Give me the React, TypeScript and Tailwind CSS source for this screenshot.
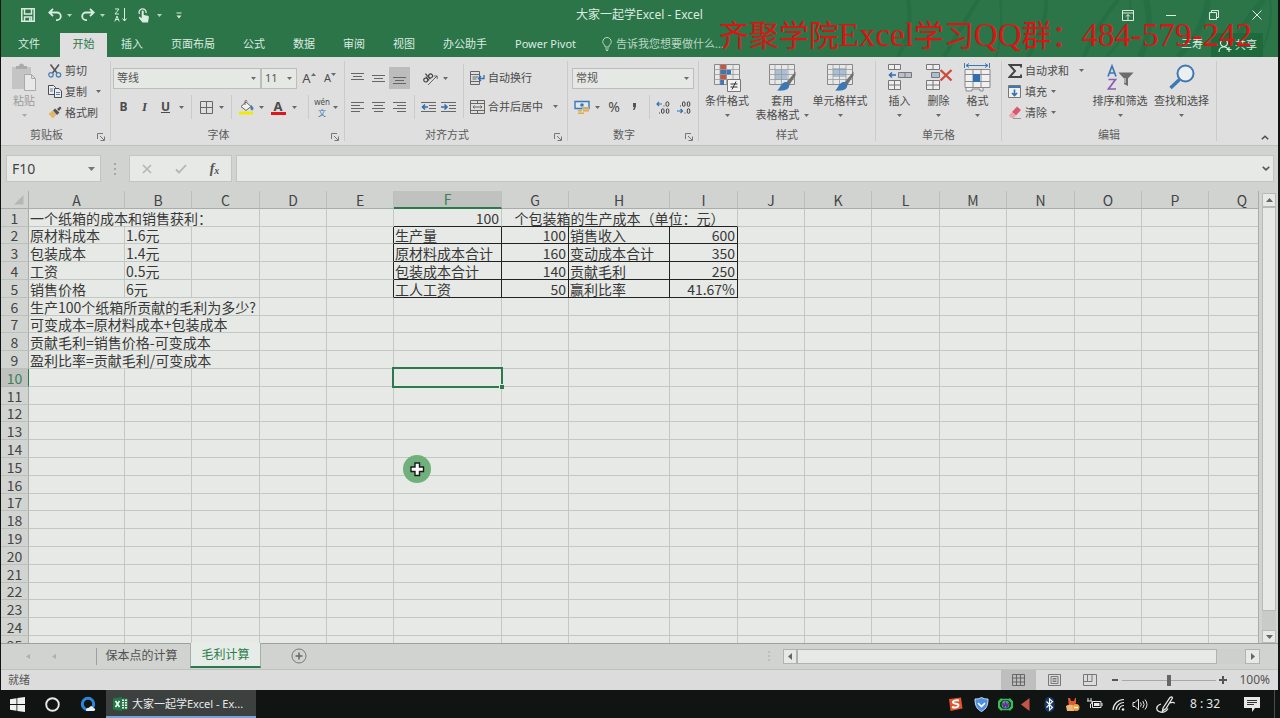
import React from "react";

type IconProps = { className?: string; children?: React.ReactNode; w?: number; h?: number };

function Svg({ className = "", children, w = 16, h = 16 }: IconProps) {
  return (
    <svg className={`shrink-0 ${className}`} width={w} height={h} viewBox={`0 0 ${w} ${h}`} fill="none" stroke="currentColor" aria-hidden="true">
      {children}
    </svg>
  );
}

function Caret({ className = "" }: { className?: string }) {
  return (
    <Svg w={5} h={3} className={className}>
      <path d="M0 0h5L2.5 3z" fill="currentColor" stroke="none" opacity=".8" />
    </Svg>
  );
}

function IconButton({ label, className, children }: { label: string; className: string; children: React.ReactNode }) {
  return (
    <button type="button" aria-label={label} className={`flex shrink-0 items-center justify-center ${className}`}>
      {children}
    </button>
  );
}

function VLine({ className = "h-5", color = "bg-[#cbcbcb]" }: { className?: string; color?: string }) {
  return <span className={`w-px shrink-0 ${color} ${className}`} />;
}

/* ---------- title bar ---------- */

function TitleBar() {
  return (
    <div className="flex h-[30px] items-center text-[#dcebe0]">
      <div className="flex flex-1 items-center">
        <IconButton label="保存" className="ml-[17px] h-6 w-5">
          <Svg w={14} h={14}>
            <path d="M.8.8h12.4v12.4H.8zM3.500 1v5h7V1M3.500 13V9h7v4" strokeWidth="1.500" />
            <path d="M8 10h1.500v3H8z" fill="currentColor" stroke="none" />
          </Svg>
        </IconButton>
        <IconButton label="撤消" className="ml-2 h-6 w-[18px]">
          <Svg w={14} h={14}>
            <path d="M1.500 4.500h7.500a3.800 3.800 0 0 1 0 7.600H8M5 .8 1.300 4.500 5 8.200" strokeWidth="1.800" />
          </Svg>
        </IconButton>
        <IconButton label="撤消选项" className="h-6 w-[10px]"><Caret /></IconButton>
        <IconButton label="恢复" className="ml-[5px] h-6 w-[18px]">
          <Svg w={14} h={14}>
            <path d="M12.500 4.500H5a3.800 3.800 0 0 0 0 7.600h1M9 .8l3.700 3.700L9 8.200" strokeWidth="1.800" />
          </Svg>
        </IconButton>
        <IconButton label="恢复选项" className="h-6 w-[10px]"><Caret /></IconButton>
        <IconButton label="降序排序" className="ml-1 h-6 w-5">
          <Svg w={14} h={14}>
            <path d="M1 1h4L1 6h4M.8 13.500 3 8l2.200 5.500M1.500 11.500h3M10.500 0v13M8.500 10.500l2 2.500 2-2.500" />
          </Svg>
        </IconButton>
        <IconButton label="触摸模式" className="ml-1 h-6 w-[18px]">
          <Svg w={14} h={15}>
            <path d="M2.500 6a3.500 3.500 0 1 1 6.500-1" strokeWidth="1.300" />
            <path d="M4.700 3.500c0-1.300 2-1.300 2 0V7l4 .8c1 .2 1.300.9 1.100 2L11 14.500H5.500L2 10.200c-.6-1 .6-1.800 1.400-1l1.300 1z" fill="currentColor" stroke="none" />
          </Svg>
        </IconButton>
        <IconButton label="触摸选项" className="h-6 w-3"><Caret /></IconButton>
        <IconButton label="自定义快速访问工具栏" className="ml-2 h-6 w-3">
          <Svg w={6} h={7}>
            <path d="M.5 1h5" />
            <path d="M.5 3.500h5L3 6.500z" fill="currentColor" stroke="none" />
          </Svg>
        </IconButton>
      </div>
      <h1 className="text-[12px] leading-4">大家一起学Excel - Excel</h1>
      <div className="flex flex-1 justify-end">
        <IconButton label="功能区显示选项" className="h-7 w-[43px]">
          <Svg w={12} h={11}>
            <path d="M.5.5h11v10H.5zM.5 3h11M6 10V5M4 6.500 6 4.500l2 2" />
          </Svg>
        </IconButton>
        <IconButton label="最小化" className="h-7 w-[43px]">
          <Svg w={10} h={10}><path d="M0 5.500h10" /></Svg>
        </IconButton>
        <IconButton label="还原" className="h-7 w-[43px]">
          <Svg w={10} h={10}><path d="M.5 2.500h7v7h-7zM2.500 2V.5h7v7H8" /></Svg>
        </IconButton>
        <IconButton label="关闭" className="h-7 w-[43px]">
          <Svg w={10} h={10}><path d="m.5.5 9 9M9.500.5l-9 9" /></Svg>
        </IconButton>
      </div>
    </div>
  );
}

const ribbonTabs = ["插入", "页面布局", "公式", "数据", "审阅", "视图", "办公助手", "Power Pivot"];

function RibbonTabs() {
  return (
    <nav className="flex h-[27px] items-stretch text-[11px] leading-4 text-[#dcebe0]">
      <button type="button" className="mr-[3px] w-14">文件</button>
      <button type="button" className="mt-[3px] w-[47px] bg-[#dfdfdf] pb-[3px] text-[#2b7a4b]">开始</button>
      {ribbonTabs.map((t) => (
        <button type="button" key={t} className="px-[14px] last-of-type:px-2">{t}</button>
      ))}
      <label className="flex flex-1 items-center gap-1 pl-3 text-[#b9d6c3]">
        <Svg w={10} h={14}>
          <path d="M3 10V8.500C1.500 7.500.8 6.200.8 4.700a4.200 4.200 0 0 1 8.400 0C9.200 6.200 8.500 7.500 7 8.500V10zM3.200 12h3.600M4 13.500h2" />
        </Svg>
        <input aria-label="告诉我" placeholder="告诉我您想要做什么..." className="w-32 bg-transparent outline-none placeholder:text-[#b9d6c3]" />
      </label>
      <button type="button" className="px-2">三寿</button>
      <button type="button" className="mt-[3px] mr-[15px] flex items-center gap-[2px] bg-[#1f6a3d] px-[6px]">
        <Svg w={16} h={14}>
          <path d="M7 8.500a3.500 3.500 0 1 0-.1 0M2 14c0-3 2-5 5-5s3.500 1 4 2M12 9v5M9.500 11.500h5" strokeWidth="1.200" />
        </Svg>
        共享
      </button>
    </nav>
  );
}

function Header() {
  return (
    <header className="relative z-10 bg-[#2b7549]">
      <svg className="pointer-events-none absolute top-0 right-0 h-full w-[400px]" viewBox="0 0 400 57" preserveAspectRatio="none" aria-hidden="true">
        <g fill="none" stroke="#1e663b" opacity=".35">
          <path d="M20 57Q36 28 30 0M66 57Q84 26 100 0M150 57Q170 20 168 0M206 57Q216 28 240 0" strokeWidth="4" />
          <path d="M262 57Q276 30 268 0M300 57Q326 30 330 0M352 57Q362 24 386 0" strokeWidth="6" />
          <path d="M118 57Q126 32 122 0M228 57Q256 30 252 0M380 57Q396 30 392 0" strokeWidth="2" />
        </g>
      </svg>
      <div className="relative">
        <TitleBar />
        <RibbonTabs />
      </div>
      <p className="pointer-events-none absolute top-[15px] right-[26px] font-['Liberation_Serif','Noto_Sans_CJK_SC',serif] text-[33px] leading-[40px] whitespace-nowrap text-[#dc1414]">
        <span className="text-[30px]">齐聚学院</span>Excel<span className="text-[30px]">学习</span>QQ<span className="text-[30px]">群：</span>484-579-242
      </p>
    </header>
  );
}

/* ---------- ribbon ---------- */

function Group({ label, className, launcher = false, children }: { label: string; className: string; launcher?: boolean; children: React.ReactNode }) {
  return (
    <section aria-label={label} className={`flex shrink-0 flex-col ${className}`}>
      <div className="flex min-h-0 flex-1">
        <div className="min-w-0 flex-1 pt-[3px]">{children}</div>
      </div>
      <div className="flex h-5 items-center pb-px text-[11px] leading-4 text-[#5c5c5c]">
        <span className="flex-1 text-center">{label}</span>
        {launcher && (
          <IconButton label={`${label}设置`} className="h-4 w-[18px] pt-1">
            <Svg w={8} h={8} className="text-[#777]"><path d="M.5 6V.5H6M3 3l4 4M7.500 3.500v4h-4" /></Svg>
          </IconButton>
        )}
      </div>
    </section>
  );
}

function SmallButton({ icon, text, caret = "" }: { icon: React.ReactNode; text: string; caret?: string }) {
  return (
    <button type="button" className="flex h-[21px] items-center text-[11px] leading-4 whitespace-nowrap">
      <span className="mr-[3px] flex w-[15px] justify-center">{icon}</span>
      {text}
      {caret && <Caret className={caret} />}
    </button>
  );
}

function BigButton({ icon, text, second, className }: { icon: React.ReactNode; text: string; second?: string; className: string }) {
  return (
    <button type="button" className={`flex shrink-0 flex-col items-center text-[11px] leading-[14px] whitespace-nowrap ${className}`}>
      <span className="flex h-[34px] items-center">{icon}</span>
      <span>{text}</span>
      <span className="flex h-[14px] items-center gap-1">{second}<Caret /></span>
    </button>
  );
}

function SelectBox({ label, value, className }: { label: string; value: string; className: string }) {
  return (
    <span className={`relative flex h-[21px] ${className}`}>
      <select aria-label={label} defaultValue={value} className="w-full appearance-none border border-[#bdbdbd] bg-[#e6e8e6] pl-[3px] text-[11px] leading-4 text-[#555] outline-none">
        <option>{value}</option>
      </select>
      <Caret className="pointer-events-none absolute top-[9px] right-[5px]" />
    </span>
  );
}

function Lines({ d }: { d: string }) {
  return <Svg w={13} h={12}><path d={d} stroke="#666" /></Svg>;
}

function StyleGrid({ conditional = false, fill = "M7 7h12v10H7z" }: { conditional?: boolean; fill?: string }) {
  return (
    <Svg w={28} h={29}>
      <path d="M1.500 1.500h25v20h-25z" fill="#e8e8e8" stroke="#888" />
      {conditional ? (
        <>
          <path d="M7 2h6v5H7zM7 12h7v5H7z" fill="#c8553d" stroke="none" />
          <path d="M7 7h11v5H7zM7 17h4v5H7z" fill="#3c78b4" stroke="none" />
        </>
      ) : (
        <path d={fill} fill="#a9bfd6" stroke="none" />
      )}
      <path d="M7 1.500v20M13.500 1.500v20M20 1.500v20M1.500 6.500h25M1.500 11.500h25M1.500 16.500h25" stroke="#999" strokeWidth=".8" />
      {conditional ? (
        <>
          <path d="M14.500 16.500h13v12h-13z" fill="#f3f3f3" stroke="#777" />
          <path d="M17.500 21h7M17.500 24h7M23 18.500l-4 8" stroke="#333" />
        </>
      ) : (
        <>
          <path d="M27.500 8.500 18 20l3 2.500 6.500-10z" fill="#707070" stroke="none" />
          <path d="M17 19c3 0 5 2 4 5-1.500 3.500-6.500 4-12 3.500 3.500-2 3-7 8-8.500z" fill="#3c78b4" stroke="none" />
        </>
      )}
    </Svg>
  );
}

function Ribbon() {
  return (
    <div className="relative flex h-[89px] shrink-0 items-stretch overflow-hidden border-b border-[#bfc1bf] bg-[#dfdfdf] text-[#4c4c4c]">
      <Group label="剪贴板" className="w-[109px]" launcher>
        <div className="flex">
          <div className="w-[46px] text-[#9c9c9c]">
            <BigButton
              className="w-full"
              text="粘贴"
              icon={
                <Svg w={26} h={28}>
                  <path d="M1 4h19v22H1z" fill="#c4c4c4" stroke="none" />
                  <path d="M5 6V3h3c0-3.500 5-3.500 5 0h3v3z" fill="#aaa" stroke="none" />
                  <path d="M13.500 11.500h7l4 4v12h-11zM20.500 11.500v4h4" fill="#e8e8e8" stroke="#aaa" />
                </Svg>
              }
            />
          </div>
          <div className="flex flex-col items-start">
            <SmallButton
              text="剪切"
              icon={
                <Svg w={14} h={14}>
                  <path d="M2.500.5 9 9M11 .5 4.500 9" stroke="#555" strokeWidth="1.600" />
                  <circle cx="3" cy="10.800" r="2.200" stroke="#4b84b8" strokeWidth="1.300" />
                  <circle cx="10.500" cy="10.800" r="2.200" stroke="#4b84b8" strokeWidth="1.300" />
                </Svg>
              }
            />
            <SmallButton
              text="复制"
              caret="ml-[9px]"
              icon={
                <Svg w={14} h={13}>
                  <path d="M.5.5h5l2 2v7h-7z" fill="#eee" />
                  <path d="M2 4h3M2 6h3" stroke="#4b84b8" />
                  <path d="M6.500 3.500h4.500l2.500 2.500v6.500h-7z" fill="#eee" />
                  <path d="M8 7.500h4M8 9.500h4" stroke="#4b84b8" />
                </Svg>
              }
            />
            <SmallButton
              text="格式刷"
              icon={
                <Svg w={14} h={13}>
                  <path d="m.5 8 4-3.500 4 4-3.500 4z" fill="#e3b76b" stroke="none" />
                  <path d="M5 4.500 7 2.500l4.500 4-2.500 2.500zM9 3l3-2.500 1.500 1.500L11 5z" fill="#555" stroke="none" />
                </Svg>
              }
            />
          </div>
        </div>
      </Group>
      <VLine className="my-1" />
      <Group label="字体" className="w-[233px]" launcher>
        <div className="flex h-9 items-center pl-[2px]">
          <SelectBox label="字体" value="等线" className="w-[148px]" />
          <SelectBox label="字号" value="11" className="w-9" />
          <IconButton label="增大字号" className="ml-[2px] h-5 w-5 text-[13px] leading-4">
            A<Caret className="mb-2 rotate-180" />
          </IconButton>
          <IconButton label="减小字号" className="ml-[2px] h-5 w-[18px] text-[11px] leading-4">
            A<Caret className="mb-2" />
          </IconButton>
        </div>
        <div className="flex h-[22px] items-center pl-[2px]">
          <IconButton label="加粗" className="h-5 w-[21px] text-[12px] leading-4 font-bold">B</IconButton>
          <IconButton label="倾斜" className="h-5 w-[21px] font-['Liberation_Serif',serif] text-[13px] leading-4 font-bold italic">I</IconButton>
          <IconButton label="下划线" className="h-5 w-[21px] text-[12px] leading-4 font-bold underline">U</IconButton>
          <IconButton label="下划线选项" className="h-5 w-[11px]"><Caret /></IconButton>
          <VLine className="ml-1 h-6" />
          <IconButton label="边框" className="ml-1 h-5 w-5">
            <Svg w={13} h={13}><path d="M.5.5h12v12H.5zM6.500.5v12M.5 6.500h12" stroke="#666" /></Svg>
          </IconButton>
          <IconButton label="边框选项" className="h-5 w-[11px]"><Caret /></IconButton>
          <VLine className="ml-1 h-6" />
          <IconButton label="填充颜色" className="ml-1 h-5 w-5">
            <Svg w={15} h={15}>
              <path d="M2 6.500 7 2l5 4.500-5 4z" fill="#f2f2f2" stroke="#666" />
              <path d="M6 5V1.500c0-1.500 2-1.500 2 0" stroke="#666" />
              <path d="M12 5.500c1.500 1 2.500 2.500 1.800 4-.5.800-1.800.500-1.800-.5z" fill="#3c78b4" stroke="#3c78b4" strokeWidth=".8" />
              <path d="M0 11.500h14v3H0z" fill="#f2ea00" stroke="none" />
            </Svg>
          </IconButton>
          <IconButton label="填充颜色选项" className="h-5 w-[11px]"><Caret /></IconButton>
          <IconButton label="字体颜色" className="h-5 w-[22px]">
            <span className="flex flex-col items-center border-b-3 border-[#e0161c] px-[3px] text-[13px] leading-[12px] font-bold">A</span>
          </IconButton>
          <IconButton label="字体颜色选项" className="h-5 w-[11px]"><Caret /></IconButton>
          <VLine className="ml-2 h-6" />
          <IconButton label="拼音" className="ml-1 h-[22px] w-[18px]">
            <span className="flex flex-col items-center text-[8px] leading-[11px]">
              <span>wén</span>
              <span className="text-[#3c78b4]">文</span>
            </span>
          </IconButton>
          <IconButton label="拼音选项" className="h-5 w-2"><Caret /></IconButton>
        </div>
      </Group>
      <VLine className="my-1" />
      <Group label="对齐方式" className="w-[222px]" launcher>
        <div className="flex">
          <div className="w-[118px] shrink-0">
            <div className="flex h-9 items-center pl-[2px]">
              <IconButton label="顶端对齐" className="h-[22px] w-[21px]"><Lines d="M0 1.500h13M2 4.500h9M0 7.500h13" /></IconButton>
              <IconButton label="垂直居中" className="h-[22px] w-[21px]"><Lines d="M0 3.500h13M2 6.500h9M0 9.500h13" /></IconButton>
              <IconButton label="底端对齐" className="h-[22px] w-[21px] bg-[#bcbcbc]"><Lines d="M0 5.500h13M2 8.500h9M0 11.500h13" /></IconButton>
              <IconButton label="方向" className="ml-[10px] h-5 w-5">
                <Svg w={17} h={15}>
                  <path d="M6 14 15 5M12 5h3.200v3" stroke="#666" />
                  <g stroke="#444" strokeWidth="1.200" transform="rotate(-42 6 7)">
                    <circle cx="3" cy="7" r="2" /><path d="M5.200 4.500V9.500M7 2v7.500" /><circle cx="9.300" cy="7.200" r="2" />
                  </g>
                </Svg>
              </IconButton>
              <IconButton label="方向选项" className="h-5 w-[10px]"><Caret /></IconButton>
            </div>
            <div className="flex h-[22px] items-center pl-[2px]">
              <IconButton label="左对齐" className="h-5 w-[21px]"><Lines d="M0 1.500h13M0 4.500h9M0 7.500h13M0 10.500h9" /></IconButton>
              <IconButton label="居中" className="h-5 w-[21px]"><Lines d="M0 1.500h13M2 4.500h9M0 7.500h13M2 10.500h9" /></IconButton>
              <IconButton label="右对齐" className="h-5 w-[21px]"><Lines d="M0 1.500h13M4 4.500h9M0 7.500h13M4 10.500h9" /></IconButton>
              <VLine className="ml-1 h-6" />
              <IconButton label="减少缩进量" className="ml-[3px] h-5 w-5">
                <Svg w={15} h={12}>
                  <path d="M0 1.500h15M8 4.500h7M8 7.500h7M0 10.500h15" stroke="#666" />
                  <path d="M7 6H1.500M4 3.500 1.500 6 4 8.500" stroke="#2f6fb2" strokeWidth="1.600" />
                </Svg>
              </IconButton>
              <IconButton label="增加缩进量" className="h-5 w-5">
                <Svg w={15} h={12}>
                  <path d="M0 1.500h15M8 4.500h7M8 7.500h7M0 10.500h15" stroke="#666" />
                  <path d="M0 6h5.500M3.500 3.500 6 6 3.500 8.500" stroke="#2f6fb2" strokeWidth="1.600" />
                </Svg>
              </IconButton>
            </div>
          </div>
          <VLine className="mt-1 h-[54px]" />
          <div className="flex flex-col items-start pl-[6px]">
            <div className="flex h-9 items-center">
              <SmallButton
                text="自动换行"
                icon={
                  <Svg w={15} h={14}>
                    <path d="M.5.5h9v13h-9zM0 3.500h10M0 10.500h10M2.500 6h6M2.500 8h4" stroke="#666" />
                    <path d="M14 4v3.500H9M11 5 8.500 7.500 11 10" stroke="#2f6fb2" strokeWidth="1.300" />
                  </Svg>
                }
              />
            </div>
            <SmallButton
              text="合并后居中"
              caret="ml-[10px]"
              icon={
                <Svg w={15} h={14}>
                  <path d="M.5.5h14v13H.5zM.5 3.500h14M.5 10.500h14M7.500.5v3M7.500 10.500v3M3 7h9M4.500 5.500 3 7l1.500 1.500M10.500 5.500 12 7l-1.500 1.500" stroke="#666" />
                </Svg>
              }
            />
          </div>
        </div>
      </Group>
      <VLine className="my-1" />
      <Group label="数字" className="w-[130px]" launcher>
        <div className="flex h-9 items-center pl-1">
          <SelectBox label="数字格式" value="常规" className="w-[122px]" />
        </div>
        <div className="flex h-[22px] items-center pl-1">
          <IconButton label="会计数字格式" className="h-5 w-5">
            <Svg w={16} h={15}>
              <path d="M1 1.500h14v7H1z" fill="#dbe7f2" stroke="#3c78b4" strokeWidth="1.400" />
              <circle cx="8" cy="5" r="1.800" fill="#3c78b4" stroke="none" />
              <path d="M8 7h7v2H8zM9 10h6v1.500H9zM4 12.500h6V14H4zM4 10h4v1.500H4z" fill="#dfa94e" stroke="none" />
            </Svg>
          </IconButton>
          <IconButton label="会计格式选项" className="h-5 w-[11px]"><Caret /></IconButton>
          <IconButton label="百分比样式" className="h-5 w-[22px] text-[14px] leading-4">%</IconButton>
          <IconButton label="千位分隔样式" className="h-5 w-[18px]">
            <Svg w={5} h={8}><path d="M1 0h3v3.500L2.500 7H1l1-3H1z" fill="#555" stroke="none" /></Svg>
          </IconButton>
          <VLine className="ml-[6px] h-6" />
          <IconButton label="增加小数位数" className="ml-[3px] h-5 w-5">
            <Svg w={14} h={13}>
              <path d="M6 3H1M3 1 1 3l2 2" stroke="#2f6fb2" strokeWidth="1.200" />
              <rect x="10" y=".8" width="2.800" height="4.500" rx="1.400" stroke="#444" />
              <rect x="5.500" y="7.800" width="2.500" height="4.500" rx="1.200" stroke="#444" />
              <rect x="10.300" y="7.800" width="2.500" height="4.500" rx="1.200" stroke="#444" />
              <path d="M8 4.500v1M3.500 11.500v1" stroke="#444" />
            </Svg>
          </IconButton>
          <IconButton label="减少小数位数" className="h-5 w-[21px]">
            <Svg w={14} h={13}>
              <path d="M0 10h5.500M3.500 8l2 2-2 2" stroke="#2f6fb2" strokeWidth="1.200" />
              <rect x="5.500" y=".8" width="2.500" height="4.500" rx="1.200" stroke="#444" />
              <rect x="10.300" y=".8" width="2.500" height="4.500" rx="1.200" stroke="#444" />
              <rect x="10.300" y="7.800" width="2.500" height="4.500" rx="1.200" stroke="#444" />
              <path d="M3.500 4.500v1M8 11.500v1" stroke="#444" />
            </Svg>
          </IconButton>
        </div>
      </Group>
      <VLine className="my-1" />
      <Group label="样式" className="w-[176px]">
        <div className="flex">
          <BigButton className="w-[56px]" text="条件格式" icon={<StyleGrid conditional />} />
          <BigButton className="w-[54px]" text="套用" second="表格格式" icon={<StyleGrid />} />
          <BigButton className="w-[62px]" text="单元格样式" icon={<StyleGrid fill="M7 5h13v9H7z" />} />
        </div>
      </Group>
      <VLine className="my-1" />
      <Group label="单元格" className="w-[125px]">
        <div className="flex pl-1">
          <BigButton
            className="w-[39px]"
            text="插入"
            icon={
              <Svg w={26} h={27}>
                <path d="M1.500.5h12v5h-12zM7.500.5v5M1.500 16.500h12v9h-12zM7.500 16.500v9M1.500 21h12" fill="#eee" stroke="#777" />
                <path d="M11.500 8.500h13v5h-13zM18 8.500v5" fill="#b9c2cc" stroke="#777" />
                <path d="M9 11H2.500M5 8.500 2.500 11 5 13.500" stroke="#2f6fb2" strokeWidth="1.600" />
              </Svg>
            }
          />
          <BigButton
            className="w-[39px]"
            text="删除"
            icon={
              <Svg w={28} h={27}>
                <path d="M1.500.5h13v5h-13zM8 .5v5M1.500 16.500h13v9h-13zM8 16.500v9M1.500 21h13" fill="#eee" stroke="#777" />
                <path d="M6.500 8.500h8v5h-8z" fill="#a9bfd6" stroke="#777" />
                <path d="m15.500 6 11 10.500M26.500 6l-11 10.500" stroke="#cf4a38" strokeWidth="2.400" />
              </Svg>
            }
          />
          <BigButton
            className="w-[39px]"
            text="格式"
            icon={
              <Svg w={27} h={29}>
                <path d="M2 2.500h22M5 .5l-3 2 3 2M21 .5l3 2-3 2M.5 0v5M25.500 0v5" stroke="#3c78b4" />
                <path d="M1 6.500h25v18H1zM9 6.500v18M17 6.500v18M1 11.500h25M1 18.500h25" fill="#f0f0f0" stroke="#888" />
                <path d="M9 11h7v8H9z" fill="#2f6fb2" stroke="none" />
                <path d="M2 25v3h6v-2h8v2h3v-3" fill="#eee" stroke="#888" />
              </Svg>
            }
          />
        </div>
      </Group>
      <VLine className="my-1" />
      <Group label="编辑" className="w-[214px]">
        <div className="flex">
          <div className="flex w-[87px] flex-col items-start pl-[5px]">
            <SmallButton
              text="自动求和"
              caret="ml-[10px]"
              icon={<Svg w={14} h={14}><path d="M13 3.500V1H1.500L7 7l-5.500 6H13v-2.500" stroke="#444" strokeWidth="1.900" /></Svg>}
            />
            <SmallButton
              text="填充"
              caret="ml-1"
              icon={
                <Svg w={13} h={13}>
                  <path d="M.5.5h12v12H.5z" fill="#f0f0f0" stroke="#777" />
                  <path d="M1 1h11v2H1z" fill="#3c78b4" stroke="none" />
                  <path d="M6.500 4.500v6M4 8l2.500 2.500L9 8" stroke="#2f6fb2" strokeWidth="1.600" />
                </Svg>
              }
            />
            <SmallButton
              text="清除"
              caret="ml-1"
              icon={
                <Svg w={14} h={13}>
                  <path d="m4 6 5-5.500 4 3.500-5 5.500z" fill="#d9596d" stroke="none" />
                  <path d="M4 6 .8 9.500 3 12h3l2-2.500z" fill="#eba7b1" stroke="none" />
                  <path d="M5 12.500h8" stroke="#999" />
                </Svg>
              }
            />
          </div>
          <BigButton
            className="w-[62px]"
            text="排序和筛选"
            icon={
              <Svg w={29} h={27}>
                <path d="M2 12.500 6 2l4 10.500M3.500 9h5" stroke="#3c78b4" strokeWidth="1.700" />
                <path d="M2.500 15.500h7l-7 9.500h7.500" stroke="#8a5cb5" strokeWidth="1.700" />
                <path d="M12.500 8.500h15l-5.500 6v7.500l-4-2v-5.500z" fill="#6c6c6c" stroke="none" />
                <path d="M19 14v5" stroke="#ccc" strokeWidth="1.300" />
              </Svg>
            }
          />
          <BigButton
            className="w-[61px]"
            text="查找和选择"
            icon={
              <Svg w={26} h={26}>
                <circle cx="16.500" cy="9.500" r="8" fill="#eceff1" stroke="#3c78b4" strokeWidth="2" />
                <path d="m10.500 15.500-9 8.500" stroke="#3c78b4" strokeWidth="3.400" />
              </Svg>
            }
          />
        </div>
      </Group>
      <VLine className="my-1" />
      <div className="flex flex-1 items-end justify-end pr-[7px] pb-[2px]">
        <IconButton label="折叠功能区" className="h-3 w-3">
          <Svg w={8} h={5}><path d="M.8 4.300 4 1.200l3.200 3.100" strokeWidth="1.500" /></Svg>
        </IconButton>
      </div>
    </div>
  );
}

/* ---------- formula bar ---------- */

function FormulaBar() {
  return (
    <div className="flex h-[45px] shrink-0 items-center bg-[#d0d3d0] pr-[4px] pl-[5px] text-[#555]">
      <div className="flex h-[27px] w-[95px] items-center border border-[#c2c5c2] bg-[#e6e9e5]">
        <input aria-label="名称框" defaultValue="F10" className="w-full min-w-0 bg-transparent pl-[5px] text-[14px] leading-5 text-[#444] outline-none" />
        <IconButton label="名称列表" className="h-5 w-[18px]">
          <Svg w={7} h={4}><path d="M0 0h7L3.500 4z" fill="#777" stroke="none" /></Svg>
        </IconButton>
      </div>
      <Svg w={28} h={14} className="text-[#999]">
        <path d="M14 1v2M14 6v2M14 11v2" strokeWidth="1.500" />
      </Svg>
      <div className="flex h-[27px] w-[103px] items-center border border-[#c2c5c2] bg-[#e6e9e5]">
        <IconButton label="取消" className="h-5 w-[34px]">
          <Svg w={10} h={10}><path d="m1 1 8 8M9 1 1 9" stroke="#b5b5b5" strokeWidth="1.600" /></Svg>
        </IconButton>
        <IconButton label="输入" className="h-5 w-[34px]">
          <Svg w={12} h={10}><path d="m1 5.500 3 3 7-7.500" stroke="#b5b5b5" strokeWidth="1.800" /></Svg>
        </IconButton>
        <IconButton label="插入函数" className="h-5 w-[33px] font-['Liberation_Serif',serif] text-[14px] leading-4 font-bold italic">
          f<span className="pt-1 text-[10px] leading-3">x</span>
        </IconButton>
      </div>
      <div className="ml-1 flex h-[27px] flex-1 items-center border border-[#c2c5c2] bg-[#e6e9e5]">
        <input aria-label="编辑栏" className="min-w-0 flex-1 bg-transparent px-1 text-[14px] leading-5 outline-none" />
        <IconButton label="展开编辑栏" className="h-5 w-[15px]">
          <Svg w={8} h={5}><path d="M.8.8 4 3.800 7.200.8" strokeWidth="1.600" /></Svg>
        </IconButton>
      </div>
    </div>
  );
}

/* ---------- worksheet ---------- */

const columns: { name: string; width: string }[] = [
  { name: "A", width: "w-[96px]" },
  { name: "B", width: "w-[67px]" },
  { name: "C", width: "w-[68px]" },
  { name: "D", width: "w-[67px]" },
  { name: "E", width: "w-[67px]" },
  { name: "F", width: "w-[108px]" },
  { name: "G", width: "w-[67px]" },
  { name: "H", width: "w-[101px]" },
  { name: "I", width: "w-[68px]" },
  { name: "J", width: "w-[67px]" },
  { name: "K", width: "w-[67px]" },
  { name: "L", width: "w-[68px]" },
  { name: "M", width: "w-[67px]" },
  { name: "N", width: "w-[68px]" },
  { name: "O", width: "w-[67px]" },
  { name: "P", width: "w-[67px]" },
  { name: "Q", width: "w-[67px]" },
];

type Cell = { text: string; span?: number; align?: "left" | "right" | "center" };

const cells: Record<string, Cell> = {
  A1: { text: "一个纸箱的成本和销售获利：", span: 3 },
  F1: { text: "100", align: "right" },
  G1: { text: "个包装箱的生产成本（单位：元）", span: 3, align: "center" },
  A2: { text: "原材料成本" },
  B2: { text: "1.6元" },
  F2: { text: "生产量" },
  G2: { text: "100", align: "right" },
  H2: { text: "销售收入" },
  I2: { text: "600", align: "right" },
  A3: { text: "包装成本" },
  B3: { text: "1.4元" },
  F3: { text: "原材料成本合计" },
  G3: { text: "160", align: "right" },
  H3: { text: "变动成本合计" },
  I3: { text: "350", align: "right" },
  A4: { text: "工资" },
  B4: { text: "0.5元" },
  F4: { text: "包装成本合计" },
  G4: { text: "140", align: "right" },
  H4: { text: "贡献毛利" },
  I4: { text: "250", align: "right" },
  A5: { text: "销售价格" },
  B5: { text: "6元" },
  F5: { text: "工人工资" },
  G5: { text: "50", align: "right" },
  H5: { text: "赢利比率" },
  I5: { text: "41.67%", align: "right" },
  A6: { text: "生产100个纸箱所贡献的毛利为多少?", span: 3 },
  A7: { text: "可变成本=原材料成本+包装成本", span: 3 },
  A8: { text: "贡献毛利=销售价格-可变成本", span: 3 },
  A9: { text: "盈利比率=贡献毛利/可变成本", span: 3 },
};

const alignClass = { left: "text-left pl-px", right: "text-right pr-[2px]", center: "text-center" };

function Row({ row }: { row: number }) {
  const out: React.ReactNode[] = [];
  for (let c = 0; c < columns.length; c++) {
    const name = columns[c].name;
    const cell = cells[`${name}${row}`];
    const boxed = row >= 2 && row <= 5;
    const right = boxed && c >= 4 && c <= 8 ? "border-r-[#222]" : "border-r-[#c3c8c3]";
    const bottom = row <= 5 && c >= 5 && c <= 8 ? "border-b-[#222]" : "border-b-[#c3c8c3]";
    const selected = name === "F" && row === 10;
    out.push(
      <td key={name} colSpan={cell?.span} className={`border-r border-b p-0 ${right} ${bottom} ${selected ? "relative" : ""} ${alignClass[cell?.align ?? "left"]}`}>
        {cell?.text}
        {selected && (
          <span className="absolute -inset-[2px] border-2 border-[#2b7a4b]">
            <span className="absolute -right-[3px] -bottom-[3px] size-[5px] border-t border-l border-[#e6e9e5] bg-[#2b7a4b]" />
          </span>
        )}
      </td>
    );
    if (cell?.span) c += cell.span - 1;
  }
  const current = row === 10;
  return (
    <tr className="h-[18px] nth-[5n+2]:h-[17px]">
      <th scope="row" className={`border-r border-b p-0 text-center font-normal ${current ? "border-r-[#2b7a4b] border-b-[#b4b8b4] bg-[#bfc2bf] text-[#3c7f58]" : "border-r-[#a9ada9] border-b-[#bcc0bc] bg-[#d2d4d2] text-[#444]"}`}>
        {row}
      </th>
      {out}
    </tr>
  );
}

function Sheet() {
  return (
    <div className="flex min-h-0 flex-1 bg-[#d0d3d0] pr-[2px]">
      <div className="relative min-w-0 flex-1 overflow-hidden border-r border-[#a9ada9] bg-[#e6e9e5]">
        <table className="w-[1275px] table-fixed border-separate border-spacing-0 font-['Noto_Sans_CJK_SC',sans-serif] text-[14px] leading-[16px] whitespace-nowrap text-[#383838]">
          <colgroup>
            <col className="w-[28px]" />
            {columns.map((c) => <col key={c.name} className={c.width} />)}
          </colgroup>
          <thead>
            <tr className="h-[18px] text-[#444]">
              <th aria-label="全选" className="border-r border-b border-[#a9ada9] bg-[#d0d3d0] p-0">
                <Svg w={10} h={10} className="ml-auto mr-1"><path d="M9.500 0v9.500H0z" fill="#b4b7b4" stroke="none" /></Svg>
              </th>
              {columns.map((c) => (
                <th key={c.name} scope="col" className={`border-r border-r-[#bcc0bc] p-0 text-center font-normal ${c.name === "F" ? "border-b-2 border-b-[#2b7a4b] bg-[#bfc2bf] leading-[15px] text-[#3c7f58]" : "border-b border-b-[#a9ada9] bg-[#d0d3d0]"}`}>
                  {c.name}
                </th>
              ))}
            </tr>
          </thead>
          <tbody>
            {Array.from({ length: 25 }, (_, i) => <Row key={i} row={i + 1} />)}
          </tbody>
        </table>
        <svg className="absolute top-[264px] left-[402px]" width="28" height="28" viewBox="0 0 28 28" aria-hidden="true">
          <circle cx="14" cy="14" r="14" fill="#6fb07c" />
          <path d="M12 8h4.500v4h4v4.500h-4v4H12v-4H8V12h4z" fill="#fff" stroke="#1b1b1b" strokeWidth="1.400" />
        </svg>
      </div>
      <div className="ml-[3px] flex w-[14px] flex-col pt-[2px]">
        <IconButton label="向上滚动" className="h-[14px] w-full border border-[#b7bab7] bg-[#e6e9e5] text-[#666]"><Svg w={7} h={4}><path d="M0 4h7L3.500 0z" fill="currentColor" stroke="none" /></Svg></IconButton>
        <div className="flex-1 border border-[#b7bab7] bg-[#e6e9e5]" />
        <div className="h-[19px] bg-[#c8cbc8]" />
        <IconButton label="向下滚动" className="h-[13px] w-full border border-[#b7bab7] bg-[#e6e9e5] text-[#666]"><Svg w={7} h={4}><path d="M0 0h7L3.500 4z" fill="currentColor" stroke="none" /></Svg></IconButton>
      </div>
    </div>
  );
}

function SheetTabs() {
  return (
    <div className="flex h-[26px] shrink-0 items-start border-t border-[#9da19d] bg-[#d0d3d0] text-[12px] leading-4 text-[#505050]">
      <div className="flex h-6 w-[95px] items-center pl-[14px] text-[#aeb1ae]">
        <IconButton label="上一张工作表" className="h-5 w-[26px]"><Svg w={4} h={5}><path d="M4 0v5L0 2.500z" fill="currentColor" stroke="none" /></Svg></IconButton>
        <IconButton label="下一张工作表" className="h-5 w-[26px]"><Svg w={4} h={5}><path d="M4 0v5L0 2.500z" fill="currentColor" stroke="none" /></Svg></IconButton>
      </div>
      <VLine className="mt-1 h-[17px]" color="bg-[#9da19d]" />
      <button type="button" className="h-6 w-[93px] pr-1">保本点的计算</button>
      <button type="button" className="-mt-px h-[25px] w-[71px] border-x border-b-2 border-x-[#a9ada9] border-b-[#2b7a4b] bg-[#e6ece7] text-[#2b7a4b]">毛利计算</button>
      <IconButton label="新工作表" className="ml-7 h-6 w-5">
        <Svg w={16} h={16}><circle cx="8" cy="8" r="7" stroke="#777" /><path d="M8 4.500v7M4.500 8h7" stroke="#666" strokeWidth="1.500" /></Svg>
      </IconButton>
      <div className="flex-1" />
      <Svg w={28} h={24} className="text-[#a5a8a5]"><path d="M14 7v2M14 11v2M14 15v2" /></Svg>
      <div className="mt-[5px] mr-[18px] flex h-[15px] w-[477px] bg-[#c8cbc8]">
        <IconButton label="向左滚动" className="w-[14px] border border-[#b0b3b0] bg-[#e6e9e5] text-[#666]"><Svg w={4} h={7}><path d="M4 0v7L0 3.500z" fill="currentColor" stroke="none" /></Svg></IconButton>
        <div className="flex-1 border border-[#b0b3b0] bg-[#e6e9e5]" />
        <div className="w-7 bg-[#cdd0cd]" />
        <IconButton label="向右滚动" className="w-[15px] border border-[#b0b3b0] bg-[#e6e9e5] text-[#666]"><Svg w={4} h={7}><path d="M0 0v7l4-3.500z" fill="currentColor" stroke="none" /></Svg></IconButton>
      </div>
    </div>
  );
}

function StatusBar() {
  return (
    <div className="flex h-[21px] shrink-0 items-center border-t border-[#bfc1bf] bg-[#dcdcdc] pr-[8px] pl-[7px] text-[11px] leading-4 text-[#555]">
      <span className="flex-1">就绪</span>
      <IconButton label="普通" className="h-full w-[35px] bg-[#bebebe]">
        <Svg w={13} h={12}><path d="M.5.5h12v11H.5zM4.500.5v11M8.500.5v11M.5 4h12M.5 8h12" stroke="#666" /></Svg>
      </IconButton>
      <IconButton label="页面布局视图" className="h-full w-[36px]">
        <Svg w={13} h={12}><path d="M.5.5h12v11H.5zM3 2.500h7v7H3zM4.500 4.500h4M4.500 6h4M4.500 7.500h4" stroke="#777" /></Svg>
      </IconButton>
      <IconButton label="分页预览" className="h-full w-[36px]">
        <Svg w={14} h={12}><path d="M.5.500h13v11H.5zM.5 7.500h8.500v-7M4.500.5v7" stroke="#777" /></Svg>
      </IconButton>
      <IconButton label="缩小" className="h-full w-[14px]"><Svg w={6} h={6}><path d="M0 3h6" strokeWidth="2" /></Svg></IconButton>
      <input
        type="range"
        aria-label="显示比例"
        min={10}
        max={190}
        defaultValue={100}
        className="h-4 w-[94px] appearance-none bg-transparent [&::-webkit-slider-runnable-track]:h-px [&::-webkit-slider-runnable-track]:bg-[#a8a8a8] [&::-webkit-slider-thumb]:-mt-[5px] [&::-webkit-slider-thumb]:h-[11px] [&::-webkit-slider-thumb]:w-1 [&::-webkit-slider-thumb]:appearance-none [&::-webkit-slider-thumb]:bg-[#666]"
      />
      <IconButton label="放大" className="h-full w-[14px]"><Svg w={8} h={8}><path d="M0 4h8M4 0v8" strokeWidth="2" /></Svg></IconButton>
      <span className="w-10 text-right text-[12px]">100%</span>
    </div>
  );
}

/* ---------- taskbar ---------- */

function Taskbar() {
  return (
    <div className="flex h-7 shrink-0 items-stretch bg-[#101413] text-[#e8e8e8]">
      <IconButton label="开始" className="w-[33px]">
        <Svg w={15} h={15}><path d="M0 2.200 6.500 1.200V7H0zM7.300 1 15 0v7H7.300zM0 8h6.500v5.800L0 12.800zM7.300 8H15v7l-7.700-1z" fill="#f0f0f0" stroke="none" /></Svg>
      </IconButton>
      <IconButton label="Cortana" className="w-9"><Svg w={15} h={15}><circle cx="7.500" cy="7.500" r="6.300" strokeWidth="1.900" /></Svg></IconButton>
      <IconButton label="浏览器" className="w-[36px]">
        <Svg w={16} h={16}>
          <circle cx="8" cy="8" r="5.700" stroke="#2f86d6" strokeWidth="3" />
          <path d="M6 14.500c0-2 1.500-3 3-2.700.8-2.300 4-2 4.300.2 2.500 0 2.500 3 .2 3H7.500c-1 0-1.500 0-1.500-.5z" fill="#e8f2fb" stroke="none" />
        </Svg>
      </IconButton>
      <button type="button" className="flex w-[150px] items-center gap-1 border-b-2 border-[#78a3d8] bg-[#3c4140] pt-[2px] pl-[7px] text-[11px] leading-4 whitespace-nowrap">
        <Svg w={15} h={14}>
          <path d="M8 2h6.500v10H8z" fill="#eef4ef" stroke="#2b7a4b" />
          <path d="M9 4.500h5M9 7h5M9 9.500h5M11.500 2v10" stroke="#2b7a4b" />
          <path d="M0 1.500 9 0v14l-9-1.500z" fill="#1f7a45" stroke="none" />
          <path d="m2.500 4 4 6M6.500 4l-4 6" stroke="#fff" strokeWidth="1.500" />
        </Svg>
        <span>大家一起学Excel - Ex...</span>
      </button>
      <div className="flex-1" />
      <IconButton label="输入法" className="w-[26px]">
        <Svg w={15} h={15}><path d="m1 2 12-1.500 1.500 11L2.500 14z" fill="#e2542c" stroke="none" /><path d="M11 3.500C8 3 4.500 3.500 5 5.500s5.500.5 5.500 2.700S7 11 4 10" stroke="#fff" strokeWidth="1.900" /></Svg>
      </IconButton>
      <IconButton label="安全卫士" className="w-[27px]">
        <Svg w={15} h={15}><path d="M7.500.5c2 1.200 4 1.500 6.500 1.500 0 6-1.500 10-6.500 12.500C2.500 12 1 8 1 2c2.500 0 4.500-.3 6.500-1.500z" fill="#4d8fe0" stroke="#cfe0f5" /><path d="m4 6 3.500 3.500L11 6" stroke="#fff" strokeWidth="1.600" /></Svg>
      </IconButton>
      <IconButton label="显卡设置" className="w-[20px]">
        <Svg w={15} h={13}><path d="M4 1 1 4v5l3 3M11 1l3 3v5l-3 3" stroke="#35c04f" strokeWidth="2.500" /><path d="M4 1.500h7M4 11.500h7" stroke="#35c04f" strokeWidth="1.500" /><circle cx="7.500" cy="6.500" r="4" fill="#4e9c8e" stroke="none" /><path d="m4.500 5 1.500 4 1.500-4L9 9l1.500-4" stroke="#6a2aa0" strokeWidth="1.500" /></Svg>
      </IconButton>
      <IconButton label="播放器" className="w-[20px]">
        <Svg w={9} h={13}><path d="M8.500 0v13L0 6.500z" fill="#c25548" stroke="none" /></Svg>
      </IconButton>
      <IconButton label="蓝牙" className="w-[28px]">
        <Svg w={11} h={15}><path d="M5.500 0C9 0 10.500 3 10.500 7.500S9 15 5.500 15 .5 12 .5 7.500 2 0 5.500 0z" fill="#173a6c" stroke="none" /><path d="m2.500 4.500 6 6-3 2.500V2l3 2.500-6 6" stroke="#fff" strokeWidth="1.100" /></Svg>
      </IconButton>
      <IconButton label="助手" className="w-[19px]">
        <Svg w={15} h={15}><path d="M3 1h2l1 3h3l1-3h1v5l-3 4H4z" fill="#e05a2b" stroke="none" /><path d="M1 9c3-2 6-1 8 0v5H2z" fill="#e8b97a" stroke="none" /><circle cx="11" cy="10.500" r="3.500" fill="#f0a23a" stroke="none" /><path d="M9 10.500h4" stroke="#fff" strokeWidth="1.300" /></Svg>
      </IconButton>
      <IconButton label="电源" className="w-[25px]">
        <Svg w={16} h={12}><path d="M5.500 3.500h8.500v6H5.500zM15 5v3M1 0v3M4 0v3M0 3h5v2L3.500 6v4" /><path d="M7 5h5.500v3H7z" fill="currentColor" stroke="none" /></Svg>
      </IconButton>
      <IconButton label="网络" className="w-[22px]">
        <Svg w={13} h={13}><path d="M1 12A11 11 0 0 1 12 1.500M4 12a8 8 0 0 1 8-7.500M7 12a5 5 0 0 1 5-4.500" strokeWidth="1.200" /><circle cx="11" cy="11.500" r="1.300" fill="currentColor" stroke="none" /></Svg>
      </IconButton>
      <IconButton label="音量" className="w-[22px]">
        <Svg w={16} h={13}><path d="M1 4.500h2L6.500 1v11L3 8.500H1zM8.500 4.500q1.500 2 0 4M10.800 3q2.700 3.500 0 7M13 1.500q4 5 0 10" /></Svg>
      </IconButton>
      <IconButton label="手写笔" className="w-[30px]">
        <Svg w={20} h={18}><path d="M7 13 14 2.500q2-1.500 2.500.5L10 13.500 6.500 16zM5 9C0 10.500-.5 15 3 16.500s7 .5 9-3M13.500 8c2.500-1 5-1 5 .5" strokeWidth="1.300" /></Svg>
      </IconButton>
      <time className="flex w-[48px] items-center justify-center text-[12px] leading-4 whitespace-nowrap">8 : 32</time>
      <IconButton label="通知" className="w-[45px]">
        <Svg w={16} h={15}><path d="M0 0h16v11h-5l-3 4v-4H0z" fill="currentColor" stroke="none" /><path d="M3 3.500h10M3 5.500h10M3 7.500h7" stroke="#333" /></Svg>
      </IconButton>
      <VLine className="mr-[3px] h-full" color="bg-[#4a4d4c]" />
    </div>
  );
}

export default function App() {
  return (
    <main className="flex h-screen flex-col overflow-hidden border-r-2 border-l border-[#101413] bg-[#d0d3d0] font-['Noto_Sans','Noto_Sans_CJK_SC',sans-serif]">
      <Header />
      <Ribbon />
      <FormulaBar />
      <Sheet />
      <SheetTabs />
      <StatusBar />
      <Taskbar />
    </main>
  );
}
